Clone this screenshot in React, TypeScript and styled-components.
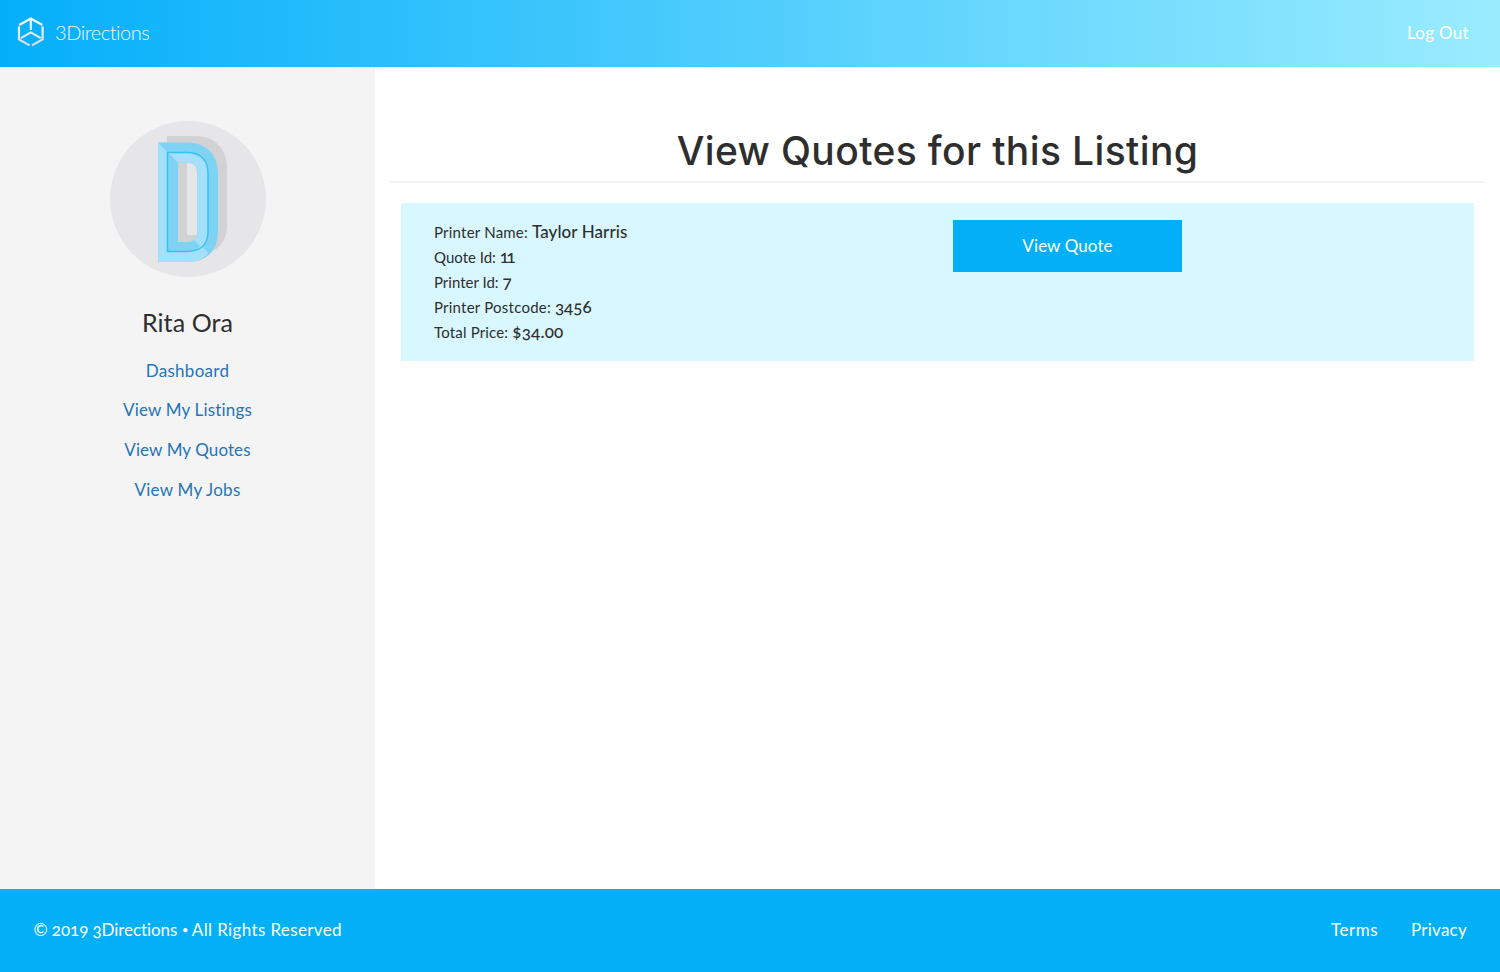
import React from "react";
import styled, { createGlobalStyle } from "styled-components";

const GlobalStyle = createGlobalStyle`
  * { box-sizing: border-box; }
  body {
    margin: 0;
    background: #fff;
    color: #2e2e2e;
    font-family: Lato, "Open Sans", sans-serif;
    font-variant-numeric: oldstyle-nums;
    font-variant-ligatures: none;
  }
  a { text-decoration: none; }
`;

const Page = styled.div`
  display: flex;
  flex-direction: column;
  height: 972px;
`;

const Header = styled.header`
  display: flex;
  align-items: center;
  justify-content: space-between;
  height: 67px;
  padding: 0 31px 0 17px;
  background: linear-gradient(90deg, #04affa 0%, #9becff 100%);
`;

const Brand = styled.a`
  display: flex;
  align-items: center;
  gap: 10px;
  margin-top: -4px;
`;

const BrandName = styled.span`
  font-family: Lato, sans-serif;
  font-size: 20px;
  line-height: 24px;
  font-weight: 300;
  font-variant-numeric: lining-nums;
  letter-spacing: -0.45px;
  margin-top: 1px;
  color: #eef7fc;
`;

const HeaderLink = styled.a`
  margin-top: -2px;
  font-size: 17px;
  line-height: 24px;
  letter-spacing: 0.3px;
  color: #fff;
`;

const Body = styled.div`
  display: flex;
  flex: 1;
`;

const Sidebar = styled.aside`
  display: flex;
  flex-direction: column;
  align-items: center;
  width: 375px;
  padding-top: 54px;
  background: #f4f4f4;
`;

const UserName = styled.h2`
  margin: 29px 0 20.5px;
  font-size: 25px;
  line-height: 32px;
  font-weight: 400;
  letter-spacing: 0.1px;
`;

const SideNav = styled.nav`
  display: flex;
  flex-direction: column;
  align-items: center;
  gap: 15.7px;
`;

const SideLink = styled.a<{ $track?: number }>`
  font-size: 17px;
  line-height: 24px;
  letter-spacing: ${(p) => p.$track ?? 0}px;
  color: #2474b9;
`;

const Main = styled.main`
  flex: 1;
  padding: 54px 15px 0;
`;

const Title = styled.h1`
  margin: 0;
  padding-top: 5px;
  height: 62px;
  border-bottom: 2px solid #f4f4f4;
  font-family: Inter, sans-serif;
  font-size: 39px;
  line-height: 50px;
  font-weight: 500;
  letter-spacing: 0.38px;
  text-align: center;
`;

const QuoteCard = styled.section`
  display: grid;
  grid-template-columns: 519px 229px;
  align-items: start;
  height: 158px;
  margin: 20px 11px 0;
  padding: 17px 0 0 33px;
  background: #d9f7ff;
`;

const Details = styled.dl`
  margin: -1px 0 0;
`;

const Detail = styled.div`
  display: flex;
  align-items: baseline;
  gap: 4px;
  height: 25px;
  line-height: 25px;
`;

const Label = styled.dt<{ $track?: number }>`
  font-size: 15px;
  letter-spacing: ${(p) => p.$track ?? 0}px;
`;

const Value = styled.dd<{ $track?: number }>`
  margin: 0;
  font-size: 17px;
  font-weight: 500;
  letter-spacing: ${(p) => p.$track ?? 0}px;
`;

const QuoteButton = styled.button`
  height: 52px;
  padding: 0 0 2px;
  border: 0;
  background: #03b0f8;
  color: #fff;
  font-family: inherit;
  font-size: 17px;
  letter-spacing: 0.1px;
`;

const Footer = styled.footer`
  display: flex;
  align-items: center;
  justify-content: space-between;
  height: 83px;
  padding: 0 33px 2px 33.5px;
  background: #03b0f8;
  color: #fff;
  font-size: 17px;
  line-height: 24px;
`;

const Copyright = styled.div`
  display: flex;
  align-items: center;
  gap: 4.8px;
`;

const FooterText = styled.span<{ $track: number }>`
  letter-spacing: ${(p) => p.$track}px;
`;

const Bullet = styled.span`
  width: 5px;
  font-size: 11px;
  text-align: center;
`;

const FooterLinks = styled.nav`
  display: flex;
  gap: 33px;
`;

const FooterLink = styled.a<{ $track: number }>`
  color: #fff;
  letter-spacing: ${(p) => p.$track}px;
`;

const CubeLogo = () => (
  <svg width="28" height="30" viewBox="0 0 28 30" fill="none" strokeWidth="2.2">
    <defs>
      <linearGradient id="silver" gradientUnits="userSpaceOnUse" x1="0" y1="0" x2="0" y2="30">
        <stop offset="0" stopColor="#fff" />
        <stop offset="1" stopColor="#d6dade" />
      </linearGradient>
    </defs>
    <g stroke="url(#silver)">
      <path d="M2.2 8 13.8 1.5 25.4 8" />
      <path d="M13.8 1.6v11.4" />
      <path d="M2 9.6v12.8l10.6 6" />
      <path d="M25.6 9.6v12.8L15 28.4" />
      <path d="M3.8 21.1 13.8 15.4 23.8 21.1" />
    </g>
  </svg>
);

const Avatar = () => (
  <svg width="156" height="156" viewBox="0 0 156 156">
    <circle cx="78" cy="78" r="78" fill="#e6e6e8" />
    <path
      fill="#d2d2d4"
      fillRule="evenodd"
      d="M57 15H85C105 15 117 28 117 47V104C117 123 105 134 85 134H57ZM77 42V114H87V51Q87 42 77 42Z"
    />
    <path
      fill="#7ed3f4"
      fillRule="evenodd"
      d="M48 21.5H77C97 21.5 108 34 108 52V111C108 129 97 141 77 141H48ZM68 41.5V121H77Q87.5 121 87.5 111V52Q87.5 41.5 77 41.5Z"
    />
    <path fill="#a4e0fa" d="M48 21.5 57.5 31.5V130.5H77Q86 130.5 91 124.5L98.5 132Q91 141 77 141H48Z" />
    <path
      fill="#a4e0fa"
      d="M57.5 31.5H77C91 31.5 98 40 98 52V111C98 118 95 123 91 126L84 119Q87.5 116 87.5 111V52Q87.5 41.5 77 41.5H68Z"
    />
    <path
      fill="none"
      stroke="#35c2ef"
      strokeWidth="1.5"
      d="M57.5 31.5H77C91 31.5 98 40 98 52V111C98 123 91 130.5 77 130.5H57.5Z"
    />
  </svg>
);

const navItems = [
  { text: "Dashboard", track: 0.3 },
  { text: "View My Listings", track: 0.17 },
  { text: "View My Quotes", track: 0.1 },
  { text: "View My Jobs", track: 0.25 },
];

const quote = [
  { label: "Printer Name:", value: "Taylor Harris", labelTrack: 0.22, valueTrack: 0.08 },
  { label: "Quote Id:", value: "11", labelTrack: 0, valueTrack: -2.5 },
  { label: "Printer Id:", value: "7", labelTrack: 0, valueTrack: 0 },
  { label: "Printer Postcode:", value: "3456", labelTrack: 0.23, valueTrack: 0 },
  { label: "Total Price:", value: "$34.00", labelTrack: 0.17, valueTrack: 0.2 },
];

export default function App() {
  return (
    <Page>
      <GlobalStyle />
      <Header>
        <Brand>
          <CubeLogo />
          <BrandName>3Directions</BrandName>
        </Brand>
        <HeaderLink>Log Out</HeaderLink>
      </Header>
      <Body>
        <Sidebar>
          <Avatar />
          <UserName>Rita Ora</UserName>
          <SideNav>
            {navItems.map((item) => (
              <SideLink key={item.text} $track={item.track}>
                {item.text}
              </SideLink>
            ))}
          </SideNav>
        </Sidebar>
        <Main>
          <Title>View Quotes for this Listing</Title>
          <QuoteCard>
            <Details>
              {quote.map((row) => (
                <Detail key={row.label}>
                  <Label $track={row.labelTrack}>{row.label}</Label>
                  <Value $track={row.valueTrack}>{row.value}</Value>
                </Detail>
              ))}
            </Details>
            <QuoteButton>View Quote</QuoteButton>
          </QuoteCard>
        </Main>
      </Body>
      <Footer>
        <Copyright>
          <FooterText $track={-0.08}>© 2019 3Directions</FooterText>
          <Bullet>•</Bullet>
          <FooterText $track={0.37}>All Rights Reserved</FooterText>
        </Copyright>
        <FooterLinks>
          <FooterLink $track={0.5}>Terms</FooterLink>
          <FooterLink $track={0.25}>Privacy</FooterLink>
        </FooterLinks>
      </Footer>
    </Page>
  );
}
